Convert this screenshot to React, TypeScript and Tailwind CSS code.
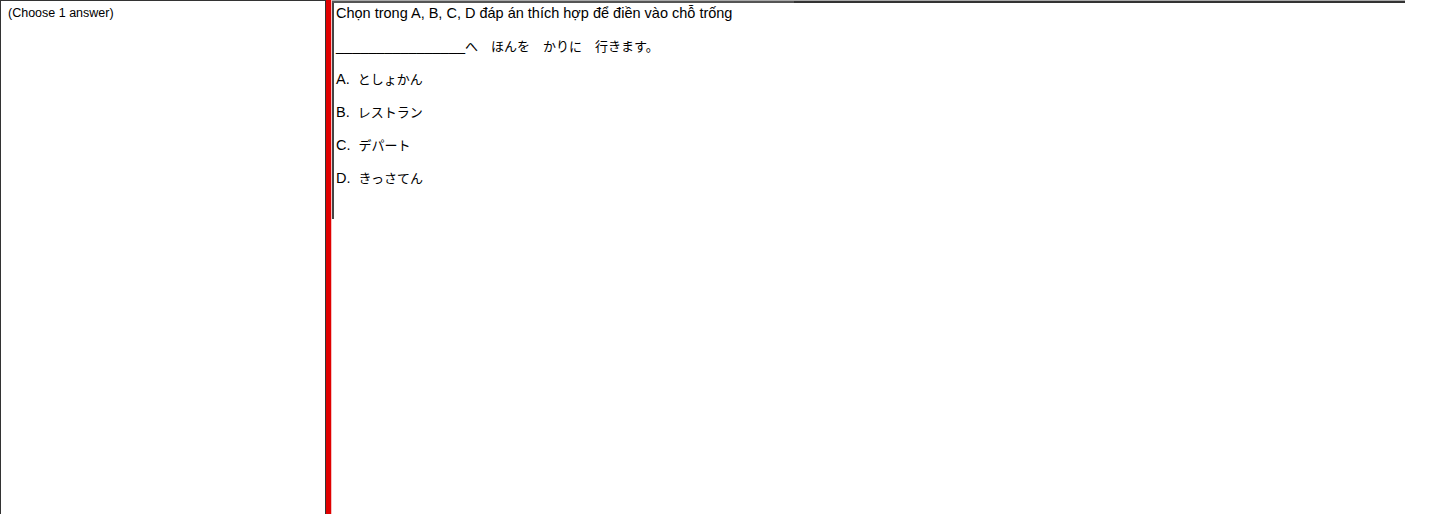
import React from "react";

export default function App() {
  const font = { fontFamily: '"Liberation Sans", Arial, "Noto Sans CJK JP", sans-serif' };
  const lines = [
    ["A.", "としょかん"],
    ["B.", "レストラン"],
    ["C.", "デパート"],
    ["D.", "きっさてん"],
  ];
  return (
    <div className="flex h-[514px] w-[1439px] bg-white text-black" style={font}>
      <div className="flex h-full w-[326px] shrink-0 border-l border-t border-r border-[#333] pl-[7px] pt-[5px]">
        <span className="text-[12.5px] leading-[15px]">(Choose 1 answer)</span>
      </div>
      <div className="h-full w-[5px] shrink-0 bg-[#e00000]" />
      <div className="h-full w-[1px] shrink-0 bg-[#f5c0c0]" />
      <div className="flex flex-1 flex-col">
        <div className="flex h-[3px] w-[1073px] flex-col">
          <div className="h-[1px] w-full bg-[#aaa]" />
          <div className="flex h-[2px] w-full">
            <div className="h-full w-[462px] bg-[#555]" />
            <div className="h-full flex-1 bg-[#333]" />
          </div>
        </div>
        <div className="flex">
          <div className="h-[216px] w-[2px] bg-[#444]" />
          <div className="flex flex-col pl-[2px] pt-[2px] text-[14.5px] leading-[17px]">
            <div className="h-[33px]">Chọn trong A, B, C, D đáp án thích hợp để điền vào chỗ trống</div>
            <div className="h-[33px]">
              ________________<span className="text-[13px]">へ　ほんを　かりに　行きます。</span>
            </div>
            {lines.map(([a, b]) => (
              <div key={a} className="h-[33px]">
                {a}&nbsp; <span className="text-[13px]">{b}</span>
              </div>
            ))}
          </div>
        </div>
      </div>
    </div>
  );
}
